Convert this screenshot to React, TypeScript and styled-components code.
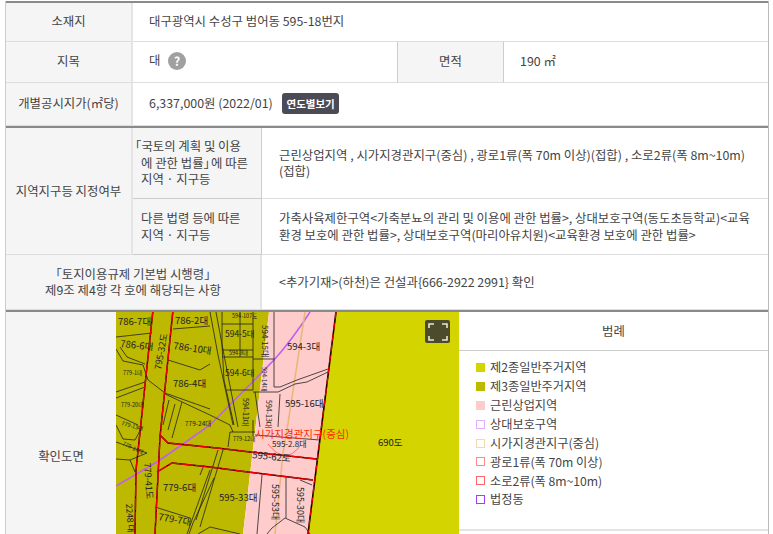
import styled, { createGlobalStyle } from "styled-components";

const GlobalStyle = createGlobalStyle`
    html, body {
        margin: 0;
        padding: 0;
        background: #fff;
        overflow: hidden;
    }
    body {
        font-family: "Noto Sans CJK KR", "Noto Sans", sans-serif;
        font-size: 12.4px;
        line-height: 16.5px;
        color: #444;
    }
`;

const blackLines = [
    "116,337 152,333", "173,329 210,326", "168,360 200,370 210,364",
    "116,349 123,361 143,365 148,380 165,393 210,409", "120,347 127,357 145,364",
    "116,392 145,382", "116,398 145,387", "165,394 210,415 230,425 233,432",
    "169,400 163,425", "182,402 172,438", "175,404 168,430",
    "116,415 138,425", "116,425 123,439 135,440 142,427",
    "116,442 147,453 130,460 116,459", "130,460 135,472",
    "155,507 190,518", "210,470 192,520 187,534", "214,478 193,523 189,534",
    "198,534 210,527 240,534",
    "222,312 222,345 224,380 234,425", "210,312 218,355 233,425", "216,312 224,355 238,427",
    "222,324 253,324", "222,350 253,350", "222,357 253,357", "253,312 253,390",
    "227,390 253,390", "253,392 278,392", "274,312 274,387 280,387",
    "253,359 274,359", "240,312 240,357", "280,387 297,380 328,369",
    "278,392 295,384 307,382 328,372", "280,394 278,427", "255,392 260,427",
    "230,432 228,447", "230,432 255,432", "253,420 253,436", "255,435 320,440",
    "262,475 257,534", "286,477 286,518", "272,528 285,518 305,527",
    "267,534 272,528", "310,534 305,527", "300,480 312,485",
    "223,450 200,527", "218,450 196,520", "204,465 200,475",
];

const redLines = [
    "153,310 136,470 135,534", "173,310 160,437 155,534",
    "160,435 168,443 217,448 250,452 317,459",
    "157,472 172,463 210,467 240,471 313,480",
];

type MapLabel = { x: number; y: number; text: string; size?: number; rotate?: number };

const mapLabels: MapLabel[] = [
    { x: 118, y: 325, text: "786-7대" },
    { x: 175, y: 324, text: "786-2대" },
    { x: 120, y: 347, text: "786-6대", rotate: 6 },
    { x: 173, y: 349, text: "786-10대", rotate: 8 },
    { x: 173, y: 387, text: "786-4대" },
    { x: 225, y: 337, text: "594-5대", size: 8.5 },
    { x: 225, y: 376, text: "594-6대", size: 8.5 },
    { x: 232, y: 318, text: "594-107도", size: 5.5 },
    { x: 229, y: 355, text: "594-8대", size: 5.5 },
    { x: 123, y: 375, text: "779-1대", size: 5.5 },
    { x: 121, y: 407, text: "779-20대", size: 5.5 },
    { x: 121, y: 425, text: "779-13대", size: 5.5, rotate: 15 },
    { x: 122, y: 445, text: "779-14대", size: 5.5, rotate: 25 },
    { x: 185, y: 426, text: "779-24대", size: 6.5 },
    { x: 161, y: 370, text: "795-32도", size: 9, rotate: -80 },
    { x: 144, y: 463, text: "779-41도", size: 9, rotate: 86 },
    { x: 126, y: 504, text: "2248 대", size: 8.5, rotate: 86 },
    { x: 163, y: 491, text: "779-6대" },
    { x: 158, y: 520, text: "779-7대", rotate: 10 },
    { x: 219, y: 501, text: "595-33대" },
    { x: 252, y: 458, text: "595-62도", rotate: 6 },
    { x: 272, y: 484, text: "595-53대", size: 9, rotate: 90 },
    { x: 297, y: 487, text: "595-30대", size: 9, rotate: 90 },
    { x: 285, y: 407, text: "595-16대" },
    { x: 287, y: 350, text: "594-3대" },
    { x: 262, y: 325, text: "594-15대", size: 8, rotate: 90 },
    { x: 262, y: 367, text: "594-14대", size: 6, rotate: 90 },
    { x: 266, y: 400, text: "594-13대", size: 7, rotate: 90 },
    { x: 243, y: 398, text: "594-11대", size: 7, rotate: 90 },
    { x: 272, y: 447, text: "595-2.8대", size: 8 },
    { x: 378, y: 446, text: "690도" },
    { x: 233, y: 441, text: "779-12대", size: 5.5 },
];

const legendItems = [
    { label: "제2종일반주거지역", fill: "#d4d400", line: "#d4d400" },
    { label: "제3종일반주거지역", fill: "#bdb800", line: "#bdb800" },
    { label: "근린상업지역", fill: "#ffcccc", line: "#ffcccc" },
    { label: "상대보호구역", fill: "#fff", line: "#e0b0ff" },
    { label: "시가지경관지구(중심)", fill: "#fff", line: "#f7d8a8" },
    { label: "광로1류(폭 70m 이상)", fill: "#fff", line: "#ff8888" },
    { label: "소로2류(폭 8m~10m)", fill: "#fff", line: "#ff6666" },
    { label: "법정동", fill: "#fff", line: "#a040ff" },
];

function ZoningMap() {
    return (
        <MapSvg viewBox="116 312 343 222">
            <polygon points="116,312 269,312 243,534 116,534" fill="#bdb800" />
            <polygon points="269,312 336,312 308,534 243,534" fill="#ffcccc" />
            <polygon points="336,312 459,312 459,534 308,534" fill="#d4d400" />
            <path d="M116 486 L157 462 L183 444 L210 425 L274 360 Q292 340 310 312" fill="none" stroke="#c060f0" strokeWidth="1.6" />
            <path d="M305 312 L287 430 L283 453 L275 534" fill="none" stroke="#e8b878" strokeWidth="1.6" />
            <path d="M268 444 Q285 466 300 446" fill="none" stroke="#ff5050" strokeWidth="0.8" />
            {blackLines.map((points) => (
                <polyline key={points} points={points} fill="none" stroke="#222" strokeWidth="0.8" />
            ))}
            {redLines.map((points) => (
                <g key={points}>
                    <polyline points={points} fill="none" stroke="#200" strokeWidth="1.4" />
                    <polyline points={points} fill="none" stroke="#f00000" strokeWidth="1.4" strokeDasharray="12 1.5" />
                </g>
            ))}
            <line x1="336" y1="312" x2="308" y2="534" stroke="#100" strokeWidth="1.6" />
            <line x1="336" y1="312" x2="308" y2="534" stroke="#f00000" strokeWidth="1.2" strokeDasharray="7 4" />
            {mapLabels.map((label) => (
                <MapText
                    key={label.text}
                    fontSize={label.size ?? 9.5}
                    transform={`translate(${label.x} ${label.y}) rotate(${label.rotate ?? 0})`}
                >
                    {label.text}
                </MapText>
            ))}
            <RedText x="255" y="438">시가지경관지구(중심)</RedText>
        </MapSvg>
    );
}

function App() {
    return (
        <>
            <GlobalStyle />
            <Page>
                <BasicInfo>
                    <Head>소재지</Head>
                    <BasicValue $span={3}>대구광역시 수성구 범어동 595-18번지</BasicValue>
                    <Head>지목</Head>
                    <BasicValue>대 <HelpBadge>?</HelpBadge></BasicValue>
                    <Head $thin>면적</Head>
                    <BasicValue>190 ㎡</BasicValue>
                    <Head>개별공시지가(㎡당)</Head>
                    <BasicValue $span={3}>6,337,000원 (2022/01) <YearButton>연도별보기</YearButton></BasicValue>
                </BasicInfo>
                <ZoneInfo>
                    <Head $rows={2}>지역지구등 지정여부</Head>
                    <SubHead>
                        <HangingLine>「국토의 계획 및 이용</HangingLine>
                        에 관한 법률<TightBracket>」</TightBracket>에 따른<br />지역 · 지구등
                    </SubHead>
                    <Value>
                        근린상업지역 , 시가지경관지구(중심) , 광로1류(폭 70m 이상)(접합) , 소로2류(폭 8m~10m)<br />(접합)
                    </Value>
                    <SubHead>다른 법령 등에 따른<br />지역 · 지구등</SubHead>
                    <Value>
                        가축사육제한구역&lt;가축분뇨의 관리 및 이용에 관한 법률&gt;, 상대보호구역(동도초등학교)&lt;교육<br />
                        환경 보호에 관한 법률&gt;, 상대보호구역(마리아유치원)&lt;교육환경 보호에 관한 법률&gt;
                    </Value>
                    <Head $span={2}>「토지이용규제 기본법 시행령」<br />제9조 제4항 각 호에 해당되는 사항</Head>
                    <Value>&lt;추가기재&gt;(하천)은 건설과{"{"}666-2922 2991{"}"} 확인</Value>
                </ZoneInfo>
                <MapRow>
                    <MapHead>확인도면</MapHead>
                    <MapPanel>
                        <ZoningMap />
                        <ExpandButton aria-label="expand">
                            <svg width="20" height="18" viewBox="0 0 20 18" fill="none" stroke="#e6e6d8" strokeWidth="1.6">
                                <path d="M1 5V1H6M14 1H19V5M19 13V17H14M6 17H1V13" />
                            </svg>
                        </ExpandButton>
                    </MapPanel>
                    <Legend>
                        <LegendTitle>범례</LegendTitle>
                        <LegendList>
                            {legendItems.map((item) => (
                                <LegendItem key={item.label}>
                                    <Swatch $fill={item.fill} $line={item.line} />
                                    {item.label}
                                </LegendItem>
                            ))}
                        </LegendList>
                    </Legend>
                </MapRow>
            </Page>
        </>
    );
}

export default App;

const Page = styled.div`
    width: 764px;
    margin: 1px 0 0 5px;
    border-left: 1px solid #ccc;
    border-right: 1px solid #bbb;
    box-sizing: border-box;
`;

const BasicInfo = styled.section`
    display: grid;
    grid-template-columns: 127px 264px 107px 1fr;
    grid-template-rows: 39px 41px 43px;
    border-top: 2px solid #8a8a8a;
    border-bottom: 2px solid #8a8a8a;

    & > * {
        padding-bottom: 2px;
    }
`;

const ZoneInfo = styled.section`
    display: grid;
    grid-template-columns: 127px 129px 1fr;
    grid-template-rows: 71px 56px 55px;
    border-bottom: 2px solid #8a8a8a;
`;

const Head = styled.div<{ $span?: number; $rows?: number; $thin?: boolean }>`
    grid-column: span ${(p) => p.$span ?? 1};
    grid-row: span ${(p) => p.$rows ?? 1};
    display: flex;
    align-items: center;
    justify-content: center;
    text-align: center;
    background: #f5f5f5;
    border-bottom: 1px solid #ddd;
    border-right: ${(p) => (p.$thin ? "1px solid #ccc" : "2px solid #e4e4e4")};
    ${(p) => p.$thin && "border-left: 1px solid #ccc;"}
`;

const SubHead = styled.div`
    padding: 0 0 0 8px;
    align-content: center;
    background: #f5f5f5;
    border-bottom: 1px solid #ccc;
    border-right: 1px solid #ccc;
    white-space: nowrap;
`;

const HangingLine = styled.div`
    text-indent: -12px;
`;

const TightBracket = styled.span`
    letter-spacing: -5px;
`;

const Value = styled.div<{ $span?: number }>`
    grid-column: span ${(p) => p.$span ?? 1};
    align-content: center;
    padding-left: 17px;
    border-bottom: 1px solid #ddd;
    white-space: nowrap;
`;

const BasicValue = styled(Value)`
    padding-left: 16px;
`;

const HelpBadge = styled.span`
    display: inline-flex;
    align-items: center;
    justify-content: center;
    width: 18px;
    height: 18px;
    margin-left: 5px;
    border-radius: 50%;
    background: #a0a0a0;
    color: #fff;
    font-weight: 700;
    font-size: 12px;
    vertical-align: middle;
`;

const YearButton = styled.button`
    height: 21px;
    margin-left: 7px;
    padding: 0 4px;
    border: 0;
    border-radius: 3px;
    background: #4b4b58;
    color: #fff;
    font-family: inherit;
    font-size: 10.5px;
    font-weight: 700;
`;

const MapRow = styled.section`
    display: flex;
    height: 222px;
`;

const MapHead = styled.div`
    width: 110px;
    flex: none;
    display: flex;
    align-items: center;
    justify-content: center;
    padding-top: 66px;
    box-sizing: border-box;
    background: #f5f5f5;
`;

const MapPanel = styled.div`
    position: relative;
    width: 343px;
    flex: none;
`;

const MapSvg = styled.svg`
    display: block;
    width: 343px;
    height: 222px;
`;

const MapText = styled.text`
    font-family: "Noto Sans CJK KR", sans-serif;
    fill: #222;
`;

const RedText = styled.text`
    font-family: "Noto Sans CJK KR", sans-serif;
    font-size: 10.5px;
    fill: #ff2a00;
`;

const ExpandButton = styled.button`
    position: absolute;
    top: 8px;
    right: 9px;
    width: 25px;
    height: 23px;
    padding: 0;
    display: flex;
    align-items: center;
    justify-content: center;
    border: 0;
    border-radius: 2px;
    background: #4c4c2c;
`;

const Legend = styled.aside`
    flex: 1;
`;

const LegendTitle = styled.div`
    height: 38px;
    display: flex;
    align-items: center;
    justify-content: center;
    border-bottom: 1px solid #ccc;
`;

const LegendList = styled.ul`
    list-style: none;
    margin: 0;
    padding: 7px 0 0 17px;
    height: 180px;
    box-sizing: border-box;
    border-bottom: 2px solid #e4e4e4;
    font-size: 12.2px;
`;

const LegendItem = styled.li`
    display: flex;
    align-items: center;
    gap: 5px;
    height: 18.9px;
`;

const Swatch = styled.span<{ $fill: string; $line: string }>`
    width: 9px;
    height: 9px;
    box-sizing: border-box;
    background: ${(p) => p.$fill};
    border: 1.5px solid ${(p) => p.$line};
`;
